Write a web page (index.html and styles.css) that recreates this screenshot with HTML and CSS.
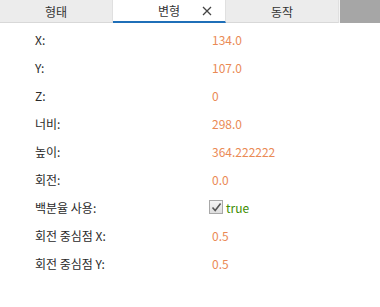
FILE: index.html
```html
<!DOCTYPE html>
<html>
<head>
    <title>속성</title>
    <link rel="stylesheet" href="styles.css">
</head>
<body>
    <div class="tabs">
        <div class="tab">형태</div>
        <div class="tab active">
            <span>변형</span>
            <svg class="close" width="10" height="10" viewBox="0 0 10 10"><path d="M1 1 L9 9 M9 1 L1 9" stroke="#444" stroke-width="1.3" fill="none"/></svg>
        </div>
        <div class="tab">동작</div>
        <div class="tab-rest"></div>
    </div>

    <div class="props">
        <div class="row"><span class="label">X:</span><span class="value">134.0</span></div>
        <div class="row"><span class="label">Y:</span><span class="value">107.0</span></div>
        <div class="row"><span class="label">Z:</span><span class="value">0</span></div>
        <div class="row"><span class="label">너비:</span><span class="value">298.0</span></div>
        <div class="row"><span class="label">높이:</span><span class="value">364.222222</span></div>
        <div class="row"><span class="label">회전:</span><span class="value">0.0</span></div>
        <div class="row">
            <span class="label">백분율 사용:</span>
            <span class="value bool">
                <span class="check">
                    <svg width="11" height="11" viewBox="0 0 11 11"><path d="M1.5 5.5 L4.2 8.6 L9.6 1.6" fill="none" stroke="#555" stroke-width="1.6"/></svg>
                </span>
                <span class="true">true</span>
            </span>
        </div>
        <div class="row"><span class="label">회전 중심점 X:</span><span class="value">0.5</span></div>
        <div class="row"><span class="label">회전 중심점 Y:</span><span class="value">0.5</span></div>
    </div>
</body>
</html>
```

FILE: styles.css
```css
body {
    margin: 0;
    background: #fff;
    font-family: "Noto Sans CJK KR", "Noto Sans", sans-serif;
    font-size: 12px;
    color: #222;
}
.tabs {
    display: flex;
    height: 23px;
}
.tab {
    width: 113px;
    box-sizing: border-box;
    background: #ececec;
    border-right: 1px solid #e0e0e0;
    border-bottom: 1px solid #d8d8d8;
    display: flex;
    align-items: center;
    justify-content: center;
    color: #333;
    font-size: 12px;
}
.tab.active {
    background: #fff;
    border-bottom: 2px solid #1f6fb8;
    position: relative;
}
.close {
    position: absolute;
    right: 13px;
    top: 6px;
}
.tab-rest {
    flex: 1;
    background: #a6a6a6;
    border-left: 1px solid #f4f4f4;
}
.props {
    padding-top: 2px;
}
.row {
    display: flex;
    align-items: center;
    height: 28px;
}
.label {
    width: 177px;
    padding-left: 35px;
    color: #2a2a2a;
}
.value {
    color: #ea8a55;
}
.bool {
    display: flex;
    align-items: center;
    gap: 3px;
    margin-left: -3px;
}
.check {
    width: 14px;
    height: 14px;
    box-sizing: border-box;
    border: 1px solid #a8a8a8;
    background: linear-gradient(#f4f4f4, #dedede);
    display: flex;
    align-items: center;
    justify-content: center;
}
.true {
    color: #3c8c00;
}
```
